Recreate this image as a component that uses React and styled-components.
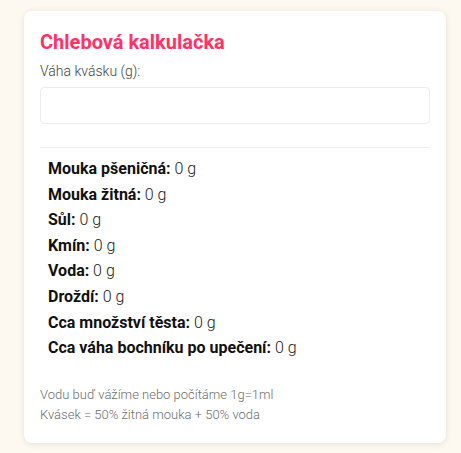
import React, { useState } from 'react';
import styled, { createGlobalStyle } from 'styled-components';

const GlobalStyle = createGlobalStyle`
  html, body {
    margin: 0;
    padding: 0;
    background: #fdf9f0;
    font-family: "Roboto Slab", Roboto, "Liberation Sans", sans-serif;
  }
`;

const Page = styled.div`
  padding: 11px 15px 12px 24px;
`;

const Card = styled.div`
  background: #fff;
  border-radius: 8px;
  box-shadow: 0 1px 6px rgba(0, 0, 0, 0.1);
  padding: 18px 16px 18px;
  width: 422px;
  box-sizing: border-box;
`;

const Title = styled.h1`
  margin: 0 0 6px;
  color: #ff3366;
  font-size: 20px;
  font-weight: 700;
  line-height: 26px;
`;

const Label = styled.label`
  display: block;
  color: #444;
  font-size: 14px;
  font-weight: 300;
  line-height: 20px;
  margin-bottom: 6px;
`;

const Input = styled.input`
  display: block;
  width: 100%;
  height: 37px;
  box-sizing: border-box;
  border: 1px solid #ececec;
  border-radius: 4px;
  padding: 0 10px;
  font: inherit;
  font-size: 14px;
  outline: none;
`;

const Divider = styled.hr`
  border: none;
  border-top: 1px solid #eee;
  margin: 23px 0 8px;
`;

const Results = styled.ul`
  list-style: none;
  margin: 0;
  padding: 0 0 0 8px;
`;

const Row = styled.li`
  font-size: 16px;
  line-height: 25.6px;
  color: #222;
  font-weight: 300;

  strong {
    font-weight: 700;
    color: #111;
  }
`;

const Notes = styled.div`
  margin-top: 24px;
  color: #6e6e6e;
  font-size: 13px;
  font-weight: 300;
  line-height: 20px;
`;

const items = [
  'Mouka pšeničná',
  'Mouka žitná',
  'Sůl',
  'Kmín',
  'Voda',
  'Droždí',
  'Cca množství těsta',
  'Cca váha bochníku po upečení',
];

export default function App() {
  const [value, setValue] = useState('');

  return (
    <Page>
      <GlobalStyle />
      <Card>
        <Title>Chlebová kalkulačka</Title>
        <Label htmlFor="kvasek">Váha kvásku (g):</Label>
        <Input id="kvasek" type="number" value={value} onChange={e => setValue(e.target.value)} />
        <Divider />
        <Results>
          {items.map(name => (
            <Row key={name}>
              <strong>{name}:</strong> 0 g
            </Row>
          ))}
        </Results>
        <Notes>
          <div>Vodu buď vážíme nebo počítáme 1g=1ml</div>
          <div>Kvásek = 50% žitná mouka + 50% voda</div>
        </Notes>
      </Card>
    </Page>
  );
}
